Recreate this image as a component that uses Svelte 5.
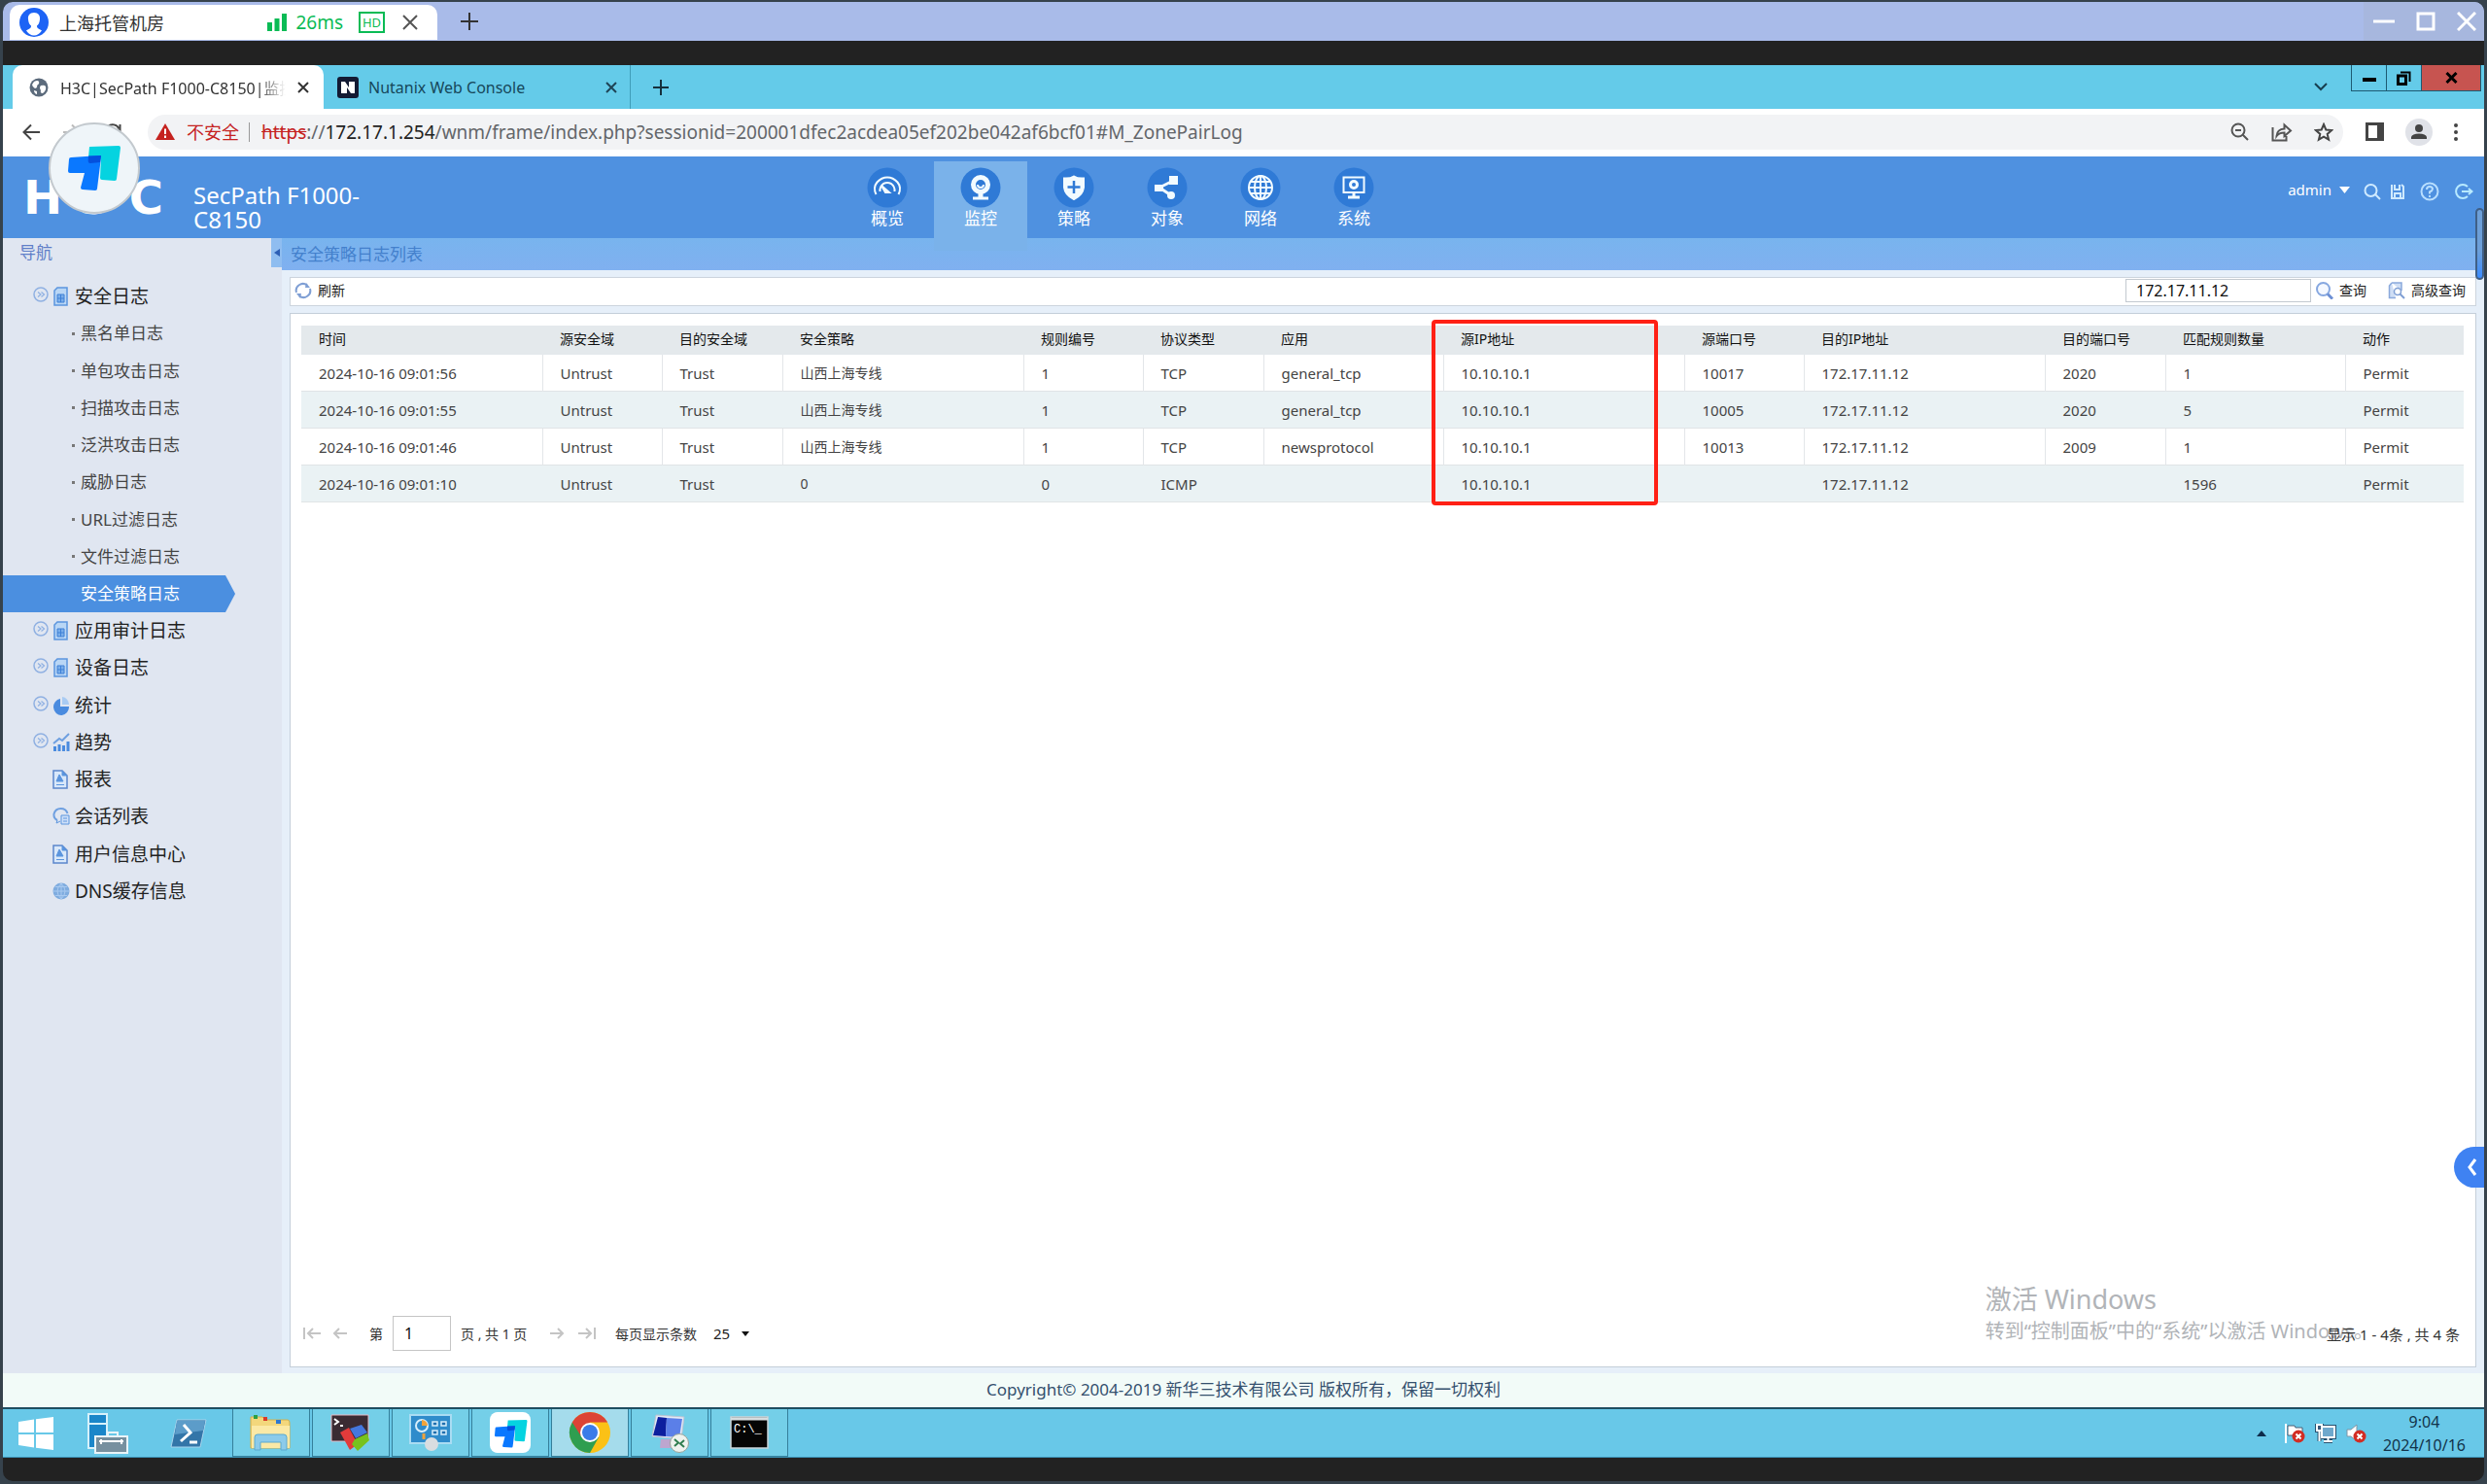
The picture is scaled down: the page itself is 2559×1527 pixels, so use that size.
<script>
  const modules = [
    { label: '概览', icon: 'gauge' },
    { label: '监控', icon: 'camera', active: true },
    { label: '策略', icon: 'shield' },
    { label: '对象', icon: 'share' },
    { label: '网络', icon: 'globe' },
    { label: '系统', icon: 'monitor' }
  ];

  const tree = [
    { label: '安全日志', icon: 'doc', toggle: true },
    { label: '黑名单日志', sub: true },
    { label: '单包攻击日志', sub: true },
    { label: '扫描攻击日志', sub: true },
    { label: '泛洪攻击日志', sub: true },
    { label: '威胁日志', sub: true },
    { label: 'URL过滤日志', sub: true },
    { label: '文件过滤日志', sub: true },
    { label: '安全策略日志', sub: true, active: true },
    { label: '应用审计日志', icon: 'doc', toggle: true },
    { label: '设备日志', icon: 'doc', toggle: true },
    { label: '统计', icon: 'pie', toggle: true },
    { label: '趋势', icon: 'trend', toggle: true },
    { label: '报表', icon: 'report' },
    { label: '会话列表', icon: 'chat' },
    { label: '用户信息中心', icon: 'report' },
    { label: 'DNS缓存信息', icon: 'dns' }
  ];

  const columns = [
    ['时间', 248], ['源安全域', 123], ['目的安全域', 124], ['安全策略', 248],
    ['规则编号', 123], ['协议类型', 124], ['应用', 185], ['源IP地址', 248],
    ['源端口号', 123], ['目的IP地址', 248], ['目的端口号', 124], ['匹配规则数量', 185], ['动作', 122]
  ];
  const total = columns.reduce((sum, c) => sum + c[1], 0);

  const rows = [
    ['2024-10-16 09:01:56', 'Untrust', 'Trust', '山西上海专线', '1', 'TCP', 'general_tcp', '10.10.10.1', '10017', '172.17.11.12', '2020', '1', 'Permit'],
    ['2024-10-16 09:01:55', 'Untrust', 'Trust', '山西上海专线', '1', 'TCP', 'general_tcp', '10.10.10.1', '10005', '172.17.11.12', '2020', '5', 'Permit'],
    ['2024-10-16 09:01:46', 'Untrust', 'Trust', '山西上海专线', '1', 'TCP', 'newsprotocol', '10.10.10.1', '10013', '172.17.11.12', '2009', '1', 'Permit'],
    ['2024-10-16 09:01:10', 'Untrust', 'Trust', '0', '0', 'ICMP', '', '10.10.10.1', '', '172.17.11.12', '', '1596', 'Permit']
  ];

  let keyword = $state('172.17.11.12');
  let page = $state('1');
</script>

{#snippet todesk()}
  <path d="M22 1 L52 0 Q54 0 54 2 L50 34 Q50 36 48 36 L35 35 Q33 35 33 33 L34 12 L21 12 Z" fill="#05d3e0" />
  <path d="M3 12 L33 10 Q34 10 34 12 L30 44 Q30 46 28 46 L15 45 Q13 45 13 43 L17 28 L2 28 Q0 28 0 26 L1 14 Q1 12 3 12 Z" fill="#0a78ff" />
  <path d="M21 10.500 L34 10 L33 17 L23 18 Q20.500 18 20.700 15 Z" fill="#0450dd" />
{/snippet}

<div class="desktop">
  <div class="remote">
    <header class="client-bar">
      <div class="client-tab">
        <svg class="avatar" viewBox="0 0 30 30" aria-hidden="true">
          <circle cx="15" cy="15" r="15" fill="#1d63f5" />
          <path d="M15 5 C10.500 5 8.500 8 9 12 C9.300 15.500 10.500 17.500 12 18.500 C12.300 21 10 21.500 7 23.500 Q10.500 28.500 15 28.500 Q19.500 28.500 23 23.500 C20 21.500 17.700 21 18 18.500 C19.500 17.500 20.700 15.500 21 12 C21.500 8 19.500 5 15 5Z" fill="#fff" />
        </svg>
        <span class="client-name">上海托管机房</span>
        <svg class="bars" viewBox="0 0 20 18" aria-hidden="true"><path d="M0 9h5v9H0zM7.500 5h5v13h-5zM15 0h5v18h-5z" fill="#0abb55" /></svg>
        <span class="ping">26ms</span>
        <span class="hd">HD</span>
        <button class="plain" aria-label="关闭连接"><svg width="16" height="16" viewBox="0 0 16 16"><path d="M1 1L15 15M15 1L1 15" stroke="#555" stroke-width="2" /></svg></button>
      </div>
      <button class="plain client-plus" aria-label="新建连接"><svg width="18" height="18" viewBox="0 0 18 18"><path d="M9 0V18M0 9H18" stroke="#333" stroke-width="2" /></svg></button>
      <div class="client-ctl">
        <button class="plain" aria-label="最小化"><svg width="22" height="20" viewBox="0 0 22 20"><path d="M0 10H22" stroke="#fff" stroke-width="3" /></svg></button>
        <button class="plain" aria-label="最大化"><svg width="20" height="20" viewBox="0 0 20 20"><path d="M2 2H18V18H2Z" fill="none" stroke="#fff" stroke-width="3" /></svg></button>
        <button class="plain" aria-label="关闭"><svg width="20" height="20" viewBox="0 0 20 20"><path d="M1 1L19 19M19 1L1 19" stroke="#fff" stroke-width="3" /></svg></button>
      </div>
    </header>

    <div class="screen">
      <div class="browser-tabs">
        <div class="btab current">
          <svg width="20" height="20" viewBox="0 0 20 20" aria-hidden="true"><circle cx="10" cy="10" r="9.500" fill="#5c6b7c" /><path d="M5 4Q9 2 10 4Q11 6 8 8Q9 10 6 11Q3 9 3 7ZM12 8Q16 7 17 9Q18 13 14 16Q11 16 12 13Q10 10 12 8ZM5 13L8 14L8 17Q5 16 5 13Z" fill="#fff" /></svg>
          <span class="btitle">H3C|SecPath F1000-C8150|监控</span>
          <button class="plain" aria-label="关闭标签页"><svg width="12" height="12" viewBox="0 0 12 12"><path d="M1 1L11 11M11 1L1 11" stroke="#333" stroke-width="2" /></svg></button>
        </div>
        <div class="btab">
          <svg width="22" height="22" viewBox="0 0 22 22" aria-hidden="true"><rect width="22" height="22" rx="3" fill="#131a33" /><path d="M4 5H8L12 11V5H18V17H14L10 11V17H4Z" fill="#fff" /></svg>
          <span class="btitle">Nutanix Web Console</span>
          <button class="plain" aria-label="关闭标签页"><svg width="12" height="12" viewBox="0 0 12 12"><path d="M1 1L11 11M11 1L1 11" stroke="#1f4456" stroke-width="2" /></svg></button>
        </div>
        <button class="plain tab-plus" aria-label="新标签页"><svg width="16" height="16" viewBox="0 0 16 16"><path d="M8 0V16M0 8H16" stroke="#15303c" stroke-width="2" /></svg></button>
        <button class="plain tab-search" aria-label="搜索标签页"><svg width="14" height="9" viewBox="0 0 14 9"><path d="M1 1L7 7L13 1" fill="none" stroke="#173f50" stroke-width="2" /></svg></button>
        <div class="win-ctl">
          <button class="plain" aria-label="最小化窗口"><svg width="14" height="14" viewBox="0 0 14 14"><path d="M0 9H14" stroke="#000" stroke-width="4" /></svg></button>
          <button class="plain" aria-label="还原窗口"><svg width="15" height="15" viewBox="0 0 15 15"><path d="M1.500 5H9.500V13.500H1.500Z" fill="none" stroke="#000" stroke-width="3" /><path d="M4 1.500H13.500V11" fill="none" stroke="#000" stroke-width="2" /></svg></button>
          <button class="plain red" aria-label="关闭窗口"><svg width="13" height="12" viewBox="0 0 13 12"><path d="M1.500 1L11.500 11M11.500 1L1.500 11" stroke="#000" stroke-width="3" /></svg></button>
        </div>
      </div>

      <div class="address">
        <div class="nav-btns">
          <button class="plain" aria-label="后退"><svg width="18" height="18" viewBox="0 0 18 18"><path d="M18 9H2M9 1.500L1.500 9L9 16.500" fill="none" stroke="#444" stroke-width="2" /></svg></button>
          <button class="plain" aria-label="前进"><svg width="18" height="18" viewBox="0 0 18 18"><path d="M0 9H16M9 1.500L16.500 9L9 16.500" fill="none" stroke="#bbb" stroke-width="2" /></svg></button>
          <button class="plain" aria-label="重新加载"><svg width="18" height="18" viewBox="0 0 18 18"><path d="M15.500 5.500A7.300 7.300 0 1 0 16 10M16.500 1V7H10.500" fill="none" stroke="#444" stroke-width="2" /></svg></button>
        </div>
        <div class="omni">
          <svg width="20" height="17" viewBox="0 0 20 17" aria-hidden="true"><path d="M10 0L20 17H0Z" fill="#c5221f" /><path d="M10 5.500V11M10 12.500V15" stroke="#fff" stroke-width="2" /></svg>
          <span class="unsafe">不安全</span>
          <span class="url"><s>https</s>://<b>172.17.1.254</b>/wnm/frame/index.php?sessionid=200001dfec2acdea05ef202be042af6bcf01#M_ZonePairLog</span>
          <span class="omni-icons">
            <svg width="20" height="20" viewBox="0 0 20 20"><circle cx="8" cy="8" r="6.500" fill="none" stroke="#555" stroke-width="2" /><path d="M5 8H11M12.500 12.500L18 18" stroke="#555" stroke-width="2" /></svg>
            <svg width="22" height="20" viewBox="0 0 22 20"><path d="M1.500 5V18.500H15.500V14M5.500 14Q6 7 13.500 6.500V2.500L20 8.500L13.500 14V10.500Q8 10.500 5.500 14Z" fill="none" stroke="#555" stroke-width="2" /></svg>
            <svg width="20" height="20" viewBox="0 0 20 20"><path d="M10 2L12.300 7.500L18.200 8L13.700 11.900L15.100 17.700L10 14.600L4.900 17.700L6.300 11.900L1.800 8L7.700 7.500Z" fill="none" stroke="#444" stroke-width="2" /></svg>
          </span>
        </div>
        <div class="ext">
          <svg width="19" height="19" viewBox="0 0 19 19"><path d="M1.500 1.500H17.500V17.500H1.500Z" fill="none" stroke="#444" stroke-width="3" /><path d="M12 1H18V18H12Z" fill="#444" /></svg>
          <svg width="28" height="28" viewBox="0 0 28 28"><circle cx="14" cy="14" r="14" fill="#e0e2e8" /><circle cx="14" cy="10" r="4" fill="#444" /><path d="M6 21V19Q7 15.500 14 15.500Q21 15.500 22 19V21Z" fill="#444" /></svg>
          <svg width="4" height="18" viewBox="0 0 4 18"><circle cx="2" cy="2" r="2" fill="#444" /><circle cx="2" cy="9" r="2" fill="#444" /><circle cx="2" cy="16" r="2" fill="#444" /></svg>
        </div>
      </div>

      <div class="app-head">
        <div class="brand">
          <span class="logo"><span>H</span><span>3</span><span>C</span></span>
          <span class="product">SecPath F1000-C8150</span>
        </div>
        <nav class="modules">
          {#each modules as m}
            <a href="#{m.icon}" class:active={m.active}>
              <svg width="42" height="42" viewBox="0 0 42 42" aria-hidden="true">
                <circle cx="21" cy="21" r="20.500" fill="#2f7ad6" />
                <g fill="none" stroke="#f2fbff" stroke-width="2">
                  {#if m.icon === 'gauge'}
                    <path d="M9.500 28Q6 21 10.500 15.500Q15 10.500 21 10.500Q27 10.500 31.500 15.500Q36 21 32.500 28" />
                    <path d="M13.500 25Q13 20 17 17Q21 15 25 17Q29 20 28.500 25" />
                    <path d="M15 19L23 26L19 26Z" fill="#f2fbff" />
                  {:else if m.icon === 'camera'}
                    <circle cx="21" cy="18" r="7.500" stroke-width="5" />
                    <path d="M18 18Q18 21 21 21Q24 21 24 18" /><path d="M13 32H29" stroke-width="3" /><path d="M21 26V32" stroke-width="5" />
                  {:else if m.icon === 'shield'}
                    <path d="M11 11.500Q17 12 21 9.500Q25 12 31 11.500V21Q30 29 21 33Q12 29 11 21Z" fill="#f2fbff" />
                    <path d="M21 14V27M14.500 20.500H27.500" stroke="#2f7ad6" stroke-width="2.500" />
                  {:else if m.icon === 'share'}
                    <path d="M13 21L27 14M13 21L25 29" stroke-width="3" />
                    <path d="M23 9H32V18H23ZM8 18H17V25H8Z" fill="#f2fbff" stroke="none" /><circle cx="25" cy="29" r="4" fill="#f2fbff" stroke="none" />
                  {:else if m.icon === 'globe'}
                    <circle cx="21" cy="21" r="12" /><ellipse cx="21" cy="21" rx="6" ry="12" /><path d="M9 21H33M21 9V33M11 15H31M11 27H31" />
                  {:else}
                    <path d="M10.500 10.500H31.500V26H10.500Z" /><path d="M15 31H27M21 26V31" stroke-width="3" /><circle cx="21" cy="18" r="3.500" stroke-width="3" />
                  {/if}
                </g>
              </svg>
              <span>{m.label}</span>
            </a>
          {/each}
        </nav>
        <div class="user">
          <button class="plain admin">admin <svg width="11" height="7" viewBox="0 0 11 7"><path d="M0 0H11L5.500 7Z" fill="#fff" /></svg></button>
          <svg width="18" height="18" viewBox="0 0 18 18"><circle cx="7.500" cy="8" r="6" fill="none" stroke="#cfeaff" stroke-width="2" /><path d="M12 12L17 17" stroke="#cfeaff" stroke-width="2" /></svg>
          <svg width="16" height="16" viewBox="0 0 16 16"><path d="M2 1V15H14V3L12 1M5 1V6H10V1M5 15V10H11V15" fill="none" stroke="#cfeaff" stroke-width="2" /></svg>
          <svg class="gap" width="20" height="20" viewBox="0 0 20 20"><circle cx="10" cy="10" r="8.500" fill="none" stroke="#b8deff" stroke-width="2" /><path d="M7 8Q7 5 10 5Q13 5 13 7.500Q13 9 10 10.500V12.500M10 14V16" fill="none" stroke="#b8deff" stroke-width="2" /></svg>
          <svg class="gap" width="20" height="18" viewBox="0 0 20 18"><path d="M14 4A7 7 0 1 0 14 14" fill="none" stroke="#b8eaff" stroke-width="2" /><path d="M8 9H18M15 6L18.500 9L15 12" fill="none" stroke="#b8eaff" stroke-width="2" /></svg>
        </div>
        <div class="float-badge"><svg width="54" height="46" viewBox="0 0 54 46" aria-hidden="true">{@render todesk()}</svg></div>
      </div>

      <div class="app-body">
        <aside class="side">
          <div class="side-head"><span>导航</span><button class="plain collapse" aria-label="收起导航"><svg width="6" height="8" viewBox="0 0 6 8"><path d="M6 0V8L0 4Z" fill="#2d5fb5" /></svg></button></div>
          <ul>
            {#each tree as item}
              <li>
                <a href="#{item.label}" class:sub={item.sub} class:active={item.active}>
                  {#if item.sub}
                    <i class="dot"></i>
                  {:else}
                    <svg class="circle" class:hidden={!item.toggle} width="16" height="16" viewBox="0 0 16 16" aria-hidden="true"><circle cx="8" cy="8" r="7" fill="none" stroke="#8fb0e2" stroke-width="1.500" /><path d="M5 5.500L8 8L5 10.500M8.500 5.500L11.500 8L8.500 10.500" fill="none" stroke="#8fb0e2" stroke-width="1.200" /></svg>
                    <svg class="kind" width="18" height="20" viewBox="0 0 18 20" aria-hidden="true">
                      {#if item.icon === 'doc'}
                        <path d="M5 1H15V19H2V4Z" fill="#b9d6f5" stroke="#5b95de" stroke-width="1.500" /><path d="M5 8H12V16H5ZM8.500 8V16M5 12H12" fill="#7aaeea" stroke="#3f80d6" />
                      {:else if item.icon === 'pie'}
                        <path d="M8 3V11H17A8 8.500 0 1 1 8 3Z" fill="#4a8bdf" /><path d="M10 1A8 8 0 0 1 17 9H10Z" fill="#a9cbf3" />
                      {:else if item.icon === 'trend'}
                        <path d="M1 14H4V19H1ZM5.500 12H8.500V19H5.500ZM10 13H13V19H10ZM14.500 9H17.500V19H14.500Z" fill="#4a8bdf" /><path d="M1 11L7 6L10 8L17 1" fill="none" stroke="#6e9fe0" stroke-width="2" />
                      {:else if item.icon === 'report'}
                        <path d="M1 1H10L15 6V19H1Z" fill="#d9e8fa" stroke="#5b86cc" stroke-width="1.500" /><path d="M10 1V6H15M4 15.500H12M4 12H11L7 5Z" fill="#5b95de" stroke="#5b95de" />
                      {:else if item.icon === 'chat'}
                        <path d="M5 14Q1 12 1.500 7.500Q3 2 8.500 2Q14 2 15.500 7" fill="none" stroke="#6e9fe0" stroke-width="2" /><path d="M9 9H17V18H9Z" fill="#cfe0f8" stroke="#5b95de" /><path d="M5 14L4 17L8 15M11 12H15M11 15H15" fill="none" stroke="#5b95de" />
                      {:else}
                        <circle cx="9" cy="10" r="8.500" fill="#7facdf" /><path d="M1 10H17M3 5.500H15M3 14.500H15M9 2V18M9 2Q1 10 9 18M9 2Q17 10 9 18" fill="none" stroke="#a9caf0" />
                      {/if}
                    </svg>
                  {/if}
                  <span>{item.label}</span>
                </a>
              </li>
            {/each}
          </ul>
        </aside>

        <main>
          <h1>安全策略日志列表</h1>
          <div class="toolbar">
            <button class="plain tool"><svg width="18" height="18" viewBox="0 0 18 18" aria-hidden="true"><path d="M2 11A7 7 0 0 1 13 3.500M16 7A7 7 0 0 1 5 14.500" fill="none" stroke="#7f9fd4" stroke-width="2" /><path d="M12 1L16 6L11 6ZM6 17L2 12L7 12Z" fill="#7f9fd4" /></svg>刷新</button>
            <input class="search" aria-label="查询关键字" bind:value={keyword} />
            <button class="plain tool"><svg width="18" height="18" viewBox="0 0 18 18" aria-hidden="true"><circle cx="7.500" cy="7.500" r="6.500" fill="#f4f8ff" stroke="#86a7e0" stroke-width="2" /><path d="M12 12.500L17 17.500" stroke="#6c8fd4" stroke-width="3" /></svg>查询</button>
            <button class="plain tool adv"><svg width="18" height="18" viewBox="0 0 18 18" aria-hidden="true"><path d="M4 1H14V9M8 16.500H1.500V4L4 1" fill="#cfdef5" stroke="#8aa9dc" stroke-width="1.500" /><circle cx="10" cy="10" r="3.500" fill="#fff" stroke="#7f9fd4" stroke-width="1.500" /><path d="M12.500 12.500L17 17" stroke="#7f9fd4" stroke-width="2" /></svg>高级查询</button>
          </div>
          <section class="panel">
            <div class="table-wrap">
              <table>
                <colgroup>
                  {#each columns as c}<col style="width: {(c[1] / total) * 100}%" />{/each}
                </colgroup>
                <thead><tr>{#each columns as c}<th scope="col">{c[0]}</th>{/each}</tr></thead>
                <tbody>
                  {#each rows as r}
                    <tr>{#each r as cell, i}<td class:han={i === 3}>{cell}</td>{/each}</tr>
                  {/each}
                </tbody>
              </table>
              <div class="mark"></div>
            </div>
            <div class="pager">
              <button class="plain" aria-label="首页"><svg width="18" height="14" viewBox="0 0 18 14"><path d="M1 1V13M18 7H5M10 2L5 7L10 12" fill="none" stroke="#c4c4c4" stroke-width="2" /></svg></button>
              <button class="plain prev" aria-label="上一页"><svg width="16" height="14" viewBox="0 0 16 14"><path d="M15 7H2M7 2L2 7L7 12" fill="none" stroke="#c4c4c4" stroke-width="2" /></svg></button>
              <label class="page">第 <input bind:value={page} /></label>
              <span class="pages">页 , 共 1 页</span>
              <button class="plain" aria-label="下一页"><svg width="16" height="14" viewBox="0 0 16 14"><path d="M1 7H14M9 2L14 7L9 12" fill="none" stroke="#c4c4c4" stroke-width="2" /></svg></button>
              <button class="plain last" aria-label="末页"><svg width="18" height="14" viewBox="0 0 18 14"><path d="M17 1V13M0 7H13M8 2L13 7L8 12" fill="none" stroke="#c4c4c4" stroke-width="2" /></svg></button>
              <label class="size">每页显示条数 <select><option>25</option><option>50</option></select><svg width="8" height="5" viewBox="0 0 8 5" aria-hidden="true"><path d="M0 0H8L4 5Z" fill="#111" /></svg></label>
              <span class="range">显示 1 - 4条 , 共 4 条</span>
            </div>
            <div class="activate"><strong>激活 Windows</strong><span>转到“控制面板”中的“系统”以激活 Windows。</span></div>
          </section>
          <button class="plain drawer" aria-label="展开工具栏"><svg width="10" height="18" viewBox="0 0 10 18"><path d="M8 1L2 9L8 17" fill="none" stroke="#fff" stroke-width="3" /></svg></button>
          <div class="thumb"></div>
        </main>
      </div>

      <footer>Copyright© 2004-2019 新华三技术有限公司 版权所有，保留一切权利</footer>

      <div class="taskbar">
        <button class="plain task bare" aria-label="开始"><svg width="36" height="34" viewBox="0 0 36 34"><path d="M0 5L16 2.500V16H0ZM18 2.200L36 0V16H18ZM0 18H16V31.500L0 29ZM18 18H36V34L18 31.800Z" fill="#fff" /></svg></button>
        <button class="plain task bare" aria-label="服务器管理器"><svg width="42" height="42" viewBox="0 0 42 42"><path d="M1 1H20V36H1Z" fill="#1b86c9" stroke="#d6f1fb" stroke-width="2" /><path d="M1 11H20" stroke="#d6f1fb" stroke-width="2" /><path d="M21 24V20H31V24" fill="none" stroke="#e9f4f8" stroke-width="2" /><rect x="8" y="24" width="33" height="17" fill="#77909f" stroke="#e9f4f8" stroke-width="2" /><path d="M12 29H37M14 27V32M35 27V32" stroke="#fff" stroke-width="2" /></svg></button>
        <button class="plain task bare" aria-label="PowerShell"><svg width="38" height="30" viewBox="0 0 38 30"><path d="M7 1H37L31 29H1Z" fill="#3375a8" stroke="#a8d4ec" /><path d="M7 2H36L34 12L5 16Z" fill="#5c9cc9" /><path d="M14 6L21 14L11 23M20 24H28" fill="none" stroke="#fff" stroke-width="3" /></svg></button>
        <button class="plain task" aria-label="文件资源管理器"><svg width="46" height="38" viewBox="0 0 46 38"><path d="M2 3H14L17 6H40Q42 6 42 9V35H2Z" fill="#f3d77c" stroke="#d4b04a" /><path d="M3 12H42V35H3Z" fill="#fbe9a6" /><path d="M5 1H9V5H5Z" fill="#2aa146" /><path d="M15 3H19V7H15Z" fill="#d8392b" /><path d="M28 6H33V10H28Z" fill="#2f78d0" /><path d="M6 37V24Q6 21 9 21H36Q39 21 39 24V37H33V29H12V37Z" fill="#8ccbea" stroke="#5aa9d0" /></svg></button>
        <button class="plain task" aria-label="远程终端"><svg width="42" height="40" viewBox="0 0 42 40"><path d="M1 2H39V29H1Z" fill="#3a2b33" stroke="#e6b9c4" /><path d="M4 6L8 9L4 12M10 13H13" fill="none" stroke="#fff" stroke-width="2" /><path d="M10 20L19 15L28 32L20 38Z" fill="#e23b3b" /><path d="M20 16L32 12L38 20L26 26Z" fill="#4477dd" /><path d="M25 27L38 21L40 28L28 39L22 32Z" fill="#77c21e" /></svg></button>
        <button class="plain task" aria-label="控制面板"><svg width="44" height="38" viewBox="0 0 44 38"><rect x="1" y="1" width="42" height="29" fill="#2f8ccb" stroke="#a9dcf3" stroke-width="2" /><circle cx="13" cy="12" r="6" fill="none" stroke="#d7eefb" stroke-width="2" /><path d="M13 6A6 6 0 0 1 19 12H13Z" fill="#f1a33a" /><path d="M24 8H29V12H24ZM33 8H38V12H33ZM24 17H29V21H24ZM33 17H38V21H33Z" fill="#1f6fae" stroke="#d7eefb" stroke-width="1.500" /><path d="M15 20V26" stroke="#f1a33a" stroke-width="3" /><circle cx="23" cy="31" r="7" fill="#d9dde0" /></svg></button>
        <button class="plain task" aria-label="远程桌面助手"><svg width="44" height="44" viewBox="0 0 44 44"><rect x="1" y="1" width="42" height="42" rx="8" fill="#fff" /><g transform="translate(6 9) scale(0.620)">{@render todesk()}</g></svg></button>
        <button class="plain task lit" aria-label="Chrome"><svg width="44" height="44" viewBox="0 0 44 44"><circle cx="22" cy="22" r="21" fill="#fbc116" /><path d="M22 22L3.800 11.500A21 21 0 0 0 22 43L31 27Z" fill="#2f9e50" /><path d="M3.800 11.500A21 21 0 0 1 40.200 11.500H22L13 26Z" fill="#dc4335" /><circle cx="22" cy="22" r="10" fill="#fff" /><circle cx="22" cy="22" r="8" fill="#3a7ce8" /></svg></button>
        <button class="plain task" aria-label="远程桌面连接"><svg width="42" height="42" viewBox="0 0 42 42"><path d="M7 3L36 5L33 28L3 25Z" fill="#e3eaf5" stroke="#b9c3d4" /><path d="M9 5L18 6L17 25L4 24Z" fill="#0d1f9e" /><path d="M18 6L34 7L31 26L17 25Z" fill="#5b7fe8" /><path d="M12 28H24L27 37H11Z" fill="#bda6cf" /><circle cx="31" cy="32" r="9.500" fill="#eef2ee" stroke="#9aa49a" /><path d="M26 28L30 31.500L26 35M36 29L32 32.500L36 36" fill="none" stroke="#2f7d4f" stroke-width="2" /></svg></button>
        <button class="plain task" aria-label="命令提示符"><svg class="cmd" width="40" height="34" viewBox="0 0 40 34"><rect x="1" y="1" width="38" height="32" fill="#050505" stroke="#c9d3d8" stroke-width="1.500" /><path d="M1 3H39" stroke="#d6dde0" stroke-width="3" /><text x="4" y="17" fill="#fff" font-size="12">C:\_</text></svg></button>
        <div class="tray">
          <svg width="10" height="6" viewBox="0 0 10 6"><path d="M0 6H10L5 0Z" fill="#0d2b4a" /></svg>
          <svg width="22" height="20" viewBox="0 0 22 20"><path d="M2 0V20" stroke="#fff" stroke-width="2" /><path d="M4 2H11L12 4H19V12H4Z" fill="#fff" stroke="#4a5f75" /><circle cx="15" cy="13" r="6.500" fill="#d22d24" /><path d="M12.500 10.500L17.500 15.500M17.500 10.500L12.500 15.500" stroke="#fff" stroke-width="2" /></svg>
          <svg width="22" height="20" viewBox="0 0 22 20"><path d="M7 3H20V14H7ZM9 18H18M13.500 14V18M2 1H7V7H2ZM4.500 7V18" fill="none" stroke="#27506f" stroke-width="4" /><path d="M7 3H20V14H7ZM9 18H18M13.500 14V18" fill="#6fa8cc" stroke="#fff" stroke-width="2" /><path d="M2 1H7V7H2ZM4.500 7V18" fill="#39597a" stroke="#fff" stroke-width="2" /></svg>
          <svg width="22" height="20" viewBox="0 0 22 20"><path d="M1 6H5L11 1V18L5 13H1Z" fill="#fff" stroke="#7f95a5" /><circle cx="14" cy="13" r="6.500" fill="#d22d24" /><path d="M11.500 10.500L16.500 15.500M16.500 10.500L11.500 15.500" stroke="#fff" stroke-width="2" /></svg>
          <div class="clock"><span>9:04</span><span>2024/10/16</span></div>
        </div>
      </div>
    </div>
  </div>
</div>

<style>
  :global(body) { margin: 0; background: #303a44; }
  .desktop {
    min-height: 100vh; box-sizing: border-box; padding: 2px 3px 3px;
    display: flex; background: #36424c;
    font-family: "Noto Sans", "Noto Sans CJK SC", sans-serif; font-size: 15px; color: #333;
  }
  .remote {
    flex: 1; min-width: 0; display: flex; flex-direction: column;
    background: #222; border-radius: 10px; padding-bottom: 24px; overflow: hidden;
  }
  .plain {
    border: 0; background: none; padding: 0; margin: 0; font: inherit; color: inherit;
    display: flex; align-items: center; justify-content: center;
  }
  svg { display: block; flex: none; }
  a { color: inherit; text-decoration: none; }

  .client-bar { height: 40px; display: flex; align-items: stretch; background: #a9bbe9; margin-bottom: 25px; }
  .client-tab {
    display: flex; align-items: center; width: 440px; box-sizing: border-box;
    margin: 3px 0 1px 7px; padding: 0 20px 0 10px; background: #fff; border-radius: 10px 10px 0 0;
  }
  .avatar { width: 30px; height: 30px; }
  .client-name { margin-left: 11px; font-size: 18px; flex: 1; }
  .bars { width: 20px; height: 18px; }
  .ping { margin: 0 16px 0 9px; font-size: 19px; color: #0abb55; }
  .hd {
    width: 27px; height: 22px; box-sizing: border-box; border: 2px solid #0abb55; color: #0abb55;
    font-size: 13px; line-height: 18px; text-align: center; margin-right: 18px;
  }
  .client-plus { width: 66px; }
  .client-ctl { margin-left: auto; display: flex; align-items: center; gap: 22px; padding: 0 8px 0 10px; background: #a7b7de; }

  .screen { flex: 1; display: flex; flex-direction: column; background: #e6eff9; min-width: 0; }
  .browser-tabs { height: 45px; display: flex; background: #64cbe9; }
  .btab { display: flex; align-items: center; font-size: 16px; color: #16475a; width: 316px; box-sizing: border-box; padding: 0 13px 0 14px; gap: 10px; border-right: 1px solid #3f9db8; background-clip: padding-box; }
  .btab.current { background: #fff; border: 0; border-radius: 10px 10px 0 0; margin-left: 10px; width: 320px; color: #333; padding-left: 17px; padding-right: 15px; gap: 12px; }
  .btitle { flex: 1; white-space: nowrap; overflow: hidden; }
  .current .btitle { mask-image: linear-gradient(90deg, #000 88%, transparent); }
  .tab-plus { width: 62px; }
  .tab-search { margin-left: auto; width: 46px; margin-right: 8px; }
  .win-ctl { display: flex; height: 26px; margin-right: 3px; border: 1px solid #1d5a72; border-top: 0; }
  .win-ctl button { width: 36px; border-right: 1px solid #1d5a72; }
  .win-ctl .red { width: 60px; background: #c75450; border: 0; }

  .address { height: 49px; box-sizing: border-box; padding-bottom: 2px; display: flex; align-items: center; background: #fff; }
  .nav-btns { display: flex; gap: 24px; padding-left: 20px; width: 129px; }
  .omni {
    flex: 1; min-width: 0; height: 36px; border-radius: 18px; background: #f2f3f5;
    display: flex; align-items: center; padding: 0 10px 0 8px;
  }
  .unsafe { color: #c5221f; font-size: 18px; margin-left: 12px; padding-right: 10px; border-right: 1px solid #999; line-height: 20px; }
  .url { margin-left: 12px; font-size: 19px; color: #63666a; white-space: nowrap; }
  .url b { font-weight: 400; color: #222; }
  .url s { color: #c5221f; }
  .omni-icons { margin-left: auto; display: flex; align-items: center; gap: 22px; }
  .ext { display: flex; align-items: center; gap: 22px; padding: 0 27px 0 23px; }

  .app-head { height: 84px; display: flex; background: #4f91e0; color: #fff; position: relative; z-index: 2; }
  .brand { flex: 0 0 862px; display: flex; }
  .logo { width: 144px; margin: 13px 0 0 21px; display: flex; justify-content: space-between; font: bold 48px/58px "DejaVu Sans", sans-serif; }
  .product { width: 180px; margin: 27px 0 0 31px; font-size: 24px; line-height: 25px; }
  .modules { display: flex; padding-top: 5px; }
  .modules a { width: 96px; height: 92px; display: flex; flex-direction: column; align-items: center; padding-top: 6px; box-sizing: border-box; font-size: 17px; line-height: 22px; }
  .modules a.active { background: #7ab2ea; }
  .user { margin-left: auto; display: flex; align-items: center; height: 72px; padding-right: 11px; gap: 9px; }
  .admin { gap: 8px; margin-right: 5px; padding-bottom: 4px; }
  .gap { margin-left: 6px; }
  .float-badge {
    position: absolute; left: 47px; top: -35px; width: 90px; height: 90px; border: 2px solid #c3c9ce;
    border-radius: 50%; background: #eff5f9; display: flex; align-items: center; justify-content: center;
  }

  .app-body { flex: 1; display: flex; min-height: 0; }
  .side { width: 287px; flex: none; background: #e0e6f1; }
  .side-head { height: 41px; display: flex; justify-content: space-between; align-items: flex-start; padding-left: 17px; font-size: 17px; line-height: 30px; color: #5f7fc8; }
  .collapse { width: 11px; height: 30px; background: #8fbdf0; }
  .side ul { list-style: none; margin: 0; padding: 0; height: 650px; display: grid; grid-auto-rows: 1fr; }
  .side li { display: flex; }
  .side a { display: flex; align-items: center; font-size: 19px; line-height: 24px; color: #222; padding-left: 31px; }
  .circle { margin-right: 4px; align-self: flex-start; margin-top: 9px; }
  .circle.hidden { visibility: hidden; }
  .kind { margin-right: 5px; }
  .side a.sub { font-size: 17px; padding-left: 71px; color: #444; }
  .dot { width: 3px; height: 3px; background: #777; margin-right: 6px; }
  .side a.active { width: 239px; box-sizing: border-box; background: #4b8fe0; color: #fff; clip-path: polygon(0 0, 229px 0, 100% 50%, 229px 100%, 0 100%); }
  .active .dot { background: none; }

  main { flex: 1; min-width: 0; display: flex; flex-direction: column; position: relative; padding-bottom: 6px; }
  h1 { margin: 0 0 7px; height: 33px; line-height: 34px; padding-left: 9px; font-size: 17px; font-weight: 400; color: #4380cc; background: linear-gradient(#78b4ee, #80b0f0); }
  .toolbar { margin: 0 8px; height: 30px; box-sizing: border-box; display: flex; align-items: center; background: #fff; border: 1px solid #ccd4dd; padding: 0 10px 2px 4px; }
  .tool { font-size: 14px; gap: 6px; color: #222; line-height: 20px; }
  .search { margin: 0 5px 0 auto; width: 191px; height: 24px; box-sizing: border-box; border: 1px solid #c3c9d0; padding: 0 10px; font: 16px "Noto Sans", sans-serif; color: #111; }
  .adv { margin-left: 22px; }
  .panel { flex: 1; margin: 7px 8px 0; background: #fff; border: 1px solid #c4ced9; display: flex; flex-direction: column; padding: 12px 12px 0 11px; position: relative; }
  .table-wrap { position: relative; }
  table { width: 100%; table-layout: fixed; border-collapse: collapse; }
  th, td { text-align: left; padding: 0 0 0 18px; font-weight: 400; white-space: nowrap; line-height: 20px; }
  th { height: 30px; box-sizing: border-box; padding-bottom: 3px; background: #e4e9ec; font-size: 14px; color: #111; }
  td { height: 38px; box-sizing: border-box; border-left: 1px solid #e3e6e9; color: #444; }
  td:first-child { border-left: 0; }
  .han { font-size: 14px; }
  tbody tr:nth-child(even) { background: #eaf2f4; }
  tbody tr:nth-child(even) td { border-color: transparent; }
  tbody tr { box-shadow: inset 0 -1px #e0e4e6; }
  .mark { position: absolute; left: 52%; margin-left: 6px; top: -6px; width: 233px; height: 191px; box-sizing: border-box; border: 4px solid #ff2015; border-radius: 4px; }

  .pager { margin-top: auto; height: 68px; padding-left: 2px; display: flex; align-items: center; font-size: 14px; color: #333; }
  .prev { margin-left: 12px; }
  .page { display: flex; align-items: center; gap: 10px; margin: 0 10px 0 22px; }
  .page input { width: 60px; height: 36px; box-sizing: border-box; border: 1px solid #c5c5c5; padding: 0 11px; font: 16px "Noto Sans", sans-serif; color: #111; }
  .pages { width: 91px; white-space: nowrap; }
  .last { margin-left: 14px; }
  .size { margin-left: 20px; display: flex; align-items: center; }
  .size select { appearance: none; border: 0; background: none; margin: 0 0 0 17px; padding: 0; width: 29px; font: 15px "Noto Sans", sans-serif; color: #222; }
  .range { margin-left: auto; padding-right: 4px; font-size: 15px; position: relative; z-index: 1; }
  .activate { position: absolute; right: 105px; bottom: 21px; display: flex; flex-direction: column; color: #b1b4b8; font-size: 20px; line-height: 30px; white-space: nowrap; }
  .activate strong { font-weight: 400; font-size: 27px; line-height: 36px; }
  .drawer { position: absolute; right: 0; bottom: 191px; width: 31px; height: 42px; background: #3f82f2; border-radius: 21px 0 0 21px; padding-left: 6px; }
  .thumb { position: absolute; right: 0; top: -31px; width: 5px; height: 70px; border: 2px solid #3f5f86; border-radius: 6px; background: linear-gradient(#6d9fd8 60%, #3b8cff); z-index: 3; }

  footer { height: 35px; line-height: 34px; text-align: center; font-size: 17px; color: #34506e; background: #f2fbf8; }
  .taskbar { height: 52px; box-sizing: border-box; display: flex; align-items: stretch; background: #68c8e8; border-top: 2px solid #1f4d60; border-bottom: 1px solid #3b8eb0; }
  .task { width: 80px; box-sizing: border-box; border: 1px solid #357f9a; border-top: 0; background: #74cfe8; margin-right: 2px; }
  .task.bare { background: none; border: 0; width: 76px; }
  .task.bare:first-child { width: 68px; }
  .task.bare:nth-child(3) { width: 86px; }
  .task.lit { background: #a5dcec; }
  .cmd { font-family: "Liberation Mono", monospace; }
  .tray { margin-left: auto; display: flex; align-items: center; gap: 10px; padding-right: 19px; }
  .tray > svg:first-child { margin-right: 8px; }
  .clock { display: flex; flex-direction: column; align-items: center; font-size: 16px; line-height: 24px; color: #12334a; margin-left: 6px; }
</style>
